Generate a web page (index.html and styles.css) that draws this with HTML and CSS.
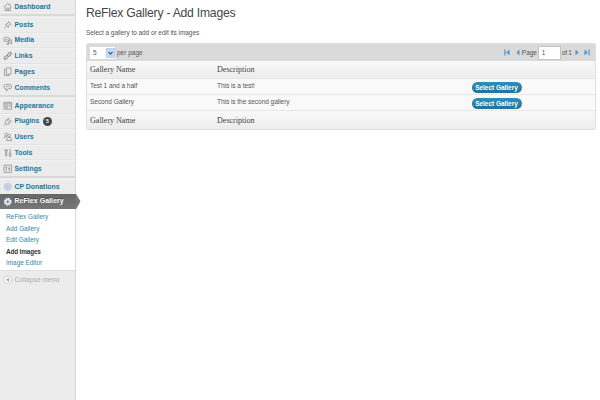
FILE: index.html
```html
<!DOCTYPE html>
<html lang="en">
<head>
<meta charset="utf-8">
<title>ReFlex Gallery</title>
<link rel="stylesheet" href="styles.css">
</head>
<body>
<div class="layout">
<nav class="sidebar">
  <ul class="group first">
    <li><svg class="icon" viewBox="0 0 10 10"><path d="M1 5.3 5 1.5l4 3.8M2.2 5v4h5.6V5M4.2 9V6.3h1.7V9M7.3 3V1.5"/></svg><a>Dashboard</a></li>
  </ul>
  <ul class="group">
    <li><svg class="icon" viewBox="0 0 10 10"><path d="M5.5 1.5 8.8 4.6M6 2 4.5 4.2 2.5 4.5l3.2 3.2.4-2L8.3 4.3M4 6.2 1 9"/></svg><a>Posts</a></li>
    <li><svg class="icon" viewBox="0 0 10 10"><path d="M1 2h1l.5-.8h1.7L4.800 2H6.500v3.500H1zM2.600 3.700h2M4.500 7v2h1.300V4.500l3.200-.5v4H7.500V6"/></svg><a>Media</a></li>
    <li><svg class="icon thick" viewBox="0 0 10 10"><path d="M4.500 4 6.500 1.800Q8 1 8.700 2.200 9 3.300 8 4L6.500 5.500Q5.500 6 4.800 5.500M5.500 5Q4.500 4 3.500 4.800L1.500 6.800Q.8 8 2 8.700 3 9 3.800 8L5 6.500"/></svg><a>Links</a></li>
    <li><svg class="icon" viewBox="0 0 10 10"><path d="M3.500 1h5v6.500h-5zM3.500 2.500H1.500v6.500h5V7.500"/></svg><a>Pages</a></li>
    <li><svg class="icon" viewBox="0 0 10 10"><path d="M2.500 1.500h5Q9 1.700 9 4 8.800 6 7 6H5.500L3.500 8.700V6Q1 6 1 4 1 1.700 2.500 1.500zM3 3.800h4"/></svg><a>Comments</a></li>
  </ul>
  <ul class="group">
    <li><svg class="icon" viewBox="0 0 10 10"><path d="M1 1.500h8v7.200H1zM1 3h8M2.500 4.500H5v2.700H2.500zM6.500 4.500H8M6.500 6H8"/></svg><a>Appearance</a></li>
    <li><svg class="icon" viewBox="0 0 10 10"><path d="M3 3.500 5.500 2l2.500 3-1.500 2.300Q4.500 8.500 3 7 1.500 5.500 3 3.500zM5.500 2 7 .9M8 5l1.200-1.500M3 7 1 9M4.500 3.500l2 2.500"/></svg><a>Plugins</a><span class="badge">5</span></li>
    <li><svg class="icon" viewBox="0 0 10 10"><circle cx="3.500" cy="2.700" r="1.500"/><circle cx="6.500" cy="3.800" r="1.500"/><path d="M1 7Q1 4.300 3.500 4.500L4.500 5.500M3.500 9Q3.800 5.500 6.500 5.500T9 9z"/></svg><a>Users</a></li>
    <li><svg class="icon" viewBox="0 0 10 10"><path d="M1 2.200h4.500M2.800 2v6.800M4 2v6.800M7.500 1v3.500M6.700 5h1.600v3.800H6.700z"/></svg><a>Tools</a></li>
    <li><svg class="icon" viewBox="0 0 10 10"><path d="M1 1.200h8v7.600H1zM3.500 2.500v5M6.500 2.500v5M2.500 3.500h2M5.500 5h2"/></svg><a>Settings</a></li>
  </ul>
  <ul class="group plugins">
    <li><svg class="icon donate" viewBox="0 0 10 10"><circle cx="5" cy="5" r="3.800"/><path d="M5 1v8M1 5h8M2.200 2.200l5.600 5.600M2.200 7.800l5.600-5.600"/></svg><a>CP Donations</a></li>
    <li class="current"><svg class="icon gear" viewBox="0 0 10 10"><circle class="cog" cx="5" cy="5" r="3.200"/><circle class="teeth" cx="5" cy="5" r="3.500"/><circle class="hub" cx="5" cy="5" r="1.200"/></svg><a>ReFlex Gallery</a><svg class="arrow" viewBox="0 0 5 16"><path d="M0 0 4.500 7.500 0 16z"/></svg></li>
  </ul>
  <ul class="submenu">
    <li><a>ReFlex Gallery</a></li>
    <li><a>Add Gallery</a></li>
    <li><a>Edit Gallery</a></li>
    <li><a class="active">Add Images</a></li>
    <li><a>Image Editor</a></li>
  </ul>
  <div class="collapse"><svg class="icon" viewBox="0 0 10 10"><circle cx="5" cy="5" r="4.200"/><path class="tip" d="M6.200 3v4L3.500 5z"/></svg><span>Collapse menu</span></div>
</nav>
<main class="content">
  <h1>ReFlex Gallery - Add Images</h1>
  <p class="intro">Select a gallery to add or edit its images</p>
  <section class="grid">
    <div class="pager">
      <span class="select"><span>5</span><svg viewBox="0 0 8 9"><rect x=".5" y=".5" width="7" height="8"/><path d="m2.200 3.500 1.800 2 1.800-2"/></svg></span>
      <span class="per">per page</span>
      <svg class="nav first-page" viewBox="0 0 6 7"><path d="M.3.500h1.200v6H.3zM5.500.500v6L2.200 3.500z"/></svg>
      <svg class="nav prev" viewBox="0 0 4 7"><path d="M3.500.500v6L.5 3.500z"/></svg>
      <span class="page">Page</span><span class="number">1</span><span class="of">of 1</span>
      <svg class="nav next" viewBox="0 0 4 7"><path d="M.5.500v6l3-3z"/></svg>
      <svg class="nav last-page" viewBox="0 0 6 7"><path d="M4.500.500h1.200v6H4.500zM.5.500v6l3.300-3z"/></svg>
    </div>
    <div class="row head"><span>Gallery Name</span><span>Description</span></div>
    <div class="row"><span>Test 1 and a half</span><span>This is a test!</span><a class="button">Select Gallery</a></div>
    <div class="row"><span>Second Gallery</span><span>This is the second gallery</span><a class="button">Select Gallery</a></div>
    <div class="row head foot"><span>Gallery Name</span><span>Description</span></div>
  </section>
</main>
</div>
</body>
</html>
```
FILE: styles.css
```css
* { box-sizing: border-box; }
body { margin: 0; background: #fff; color: #555; font: 6.5px/10px "Liberation Sans", Arial, sans-serif; overflow: hidden; }
ul { list-style: none; margin: 0; padding: 0; }
.layout { display: flex; height: 400px; }
.sidebar { width: 76px; flex: none; background: #ececec; border-right: 1px solid #d8d8d8; }
.group { border-top: 2px solid #d9d9d9; padding-top: 1px; height: 81px; }
.group.first { height: 14px; border: 0; padding: 0; }
.group li { display: flex; align-items: center; height: 15.6px; padding-left: 3px; border-bottom: 1px solid #e4e4e4; border-top: 1px solid #f2f2f2; font-weight: bold; font-size: 6.900px; color: #21759b; white-space: nowrap; }
.group li:last-child { border-bottom: 0; }
.group.first li { height: 14px; border: 0; }
.icon { width: 9.500px; height: 9.500px; margin-right: 2px; flex: none; fill: none; stroke: #929292; stroke-width: .85; }
.thick { stroke-width: 1.200; }
.donate { fill: #d5ddeb; stroke: #afbfd8; stroke-width: .6; }
.group.plugins { height: 33px; }
.group .current { position: relative; height: 15.500px; margin-top: -1px; margin-right: -1px; border: 0; background: linear-gradient(#666, #777); color: #fff; letter-spacing: .1px; text-shadow: 0 -1px #444; }
.arrow { position: absolute; left: 76px; top: 0; width: 5px; height: 15.500px; fill: #737373; }
.gear { stroke: none; }
.gear .cog { fill: #e4eaf8; }
.gear .teeth { fill: none; stroke: #e4eaf8; stroke-width: 1.400; stroke-dasharray: 1.700 1.050; }
.gear .hub { fill: #5d719b; }
.badge { width: 9px; height: 9px; margin-left: 3.500px; border-radius: 50%; background: #464646; color: #fff; font-size: 5px; line-height: 9px; text-align: center; }
.submenu { height: 62px; padding-top: 2px; background: #fff; border-bottom: 1px solid #dfdfdf; }
.submenu li { height: 11.500px; line-height: 11.500px; padding-left: 6px; font-size: 6.400px; color: #3486aa; white-space: nowrap; }
.submenu .active { color: #333; font-weight: bold; letter-spacing: -.15px; }
.collapse { display: flex; align-items: center; height: 17px; padding-left: 3px; color: #aaa; letter-spacing: .1px; }
.collapse .icon { fill: #f7f7f7; stroke: #c8c8c8; }
.collapse .tip { fill: #999; stroke: none; }
.content { flex: 1; padding: 5px 4px 0 10px; }
h1 { margin: 0; font-size: 12.200px; line-height: 16px; font-weight: normal; letter-spacing: -.24px; color: #464646; }
.intro { margin: 7px 0 5px; letter-spacing: -.05px; }
.grid { width: 510px; border: 1px solid #dfdfdf; border-radius: 2px; overflow: hidden; }
.pager { display: flex; align-items: center; height: 17px; padding: 0 5px 0 3px; background: #dadada; }
.select { display: flex; justify-content: space-between; align-items: center; width: 25px; height: 12px; padding-left: 3px; background: #fff; }
.select svg { width: 9px; height: 10px; fill: #c5daf6; stroke: #a8c3e9; stroke-width: .6; }
.select path { fill: none; stroke: #345f96; stroke-width: 1.200; }
.per { margin-left: 2px; }
.nav { flex: none; height: 7px; fill: #5294cb; }
.first-page, .last-page { width: 6px; }
.prev, .next { width: 4px; }
.first-page { margin-left: auto; }
.prev { margin: 0 2px 0 5.500px; }
.page { letter-spacing: -.05px; }
.number { width: 23px; height: 14px; margin: 0 1px; padding-left: 3px; border: 1px solid #c4c4c4; background: #fff; line-height: 12px; }
.of { letter-spacing: -.3px; }
.next { margin: 0 5.500px 0 3px; }
.row { display: grid; grid-template-columns: 127px 254.500px 1fr; align-items: start; height: 16px; padding: 2px 0 0 3px; background: #f9f9f9; border-bottom: 1px solid #e6e6e6; white-space: nowrap; letter-spacing: -.03px; }
.row.head { height: 18px; padding-top: 3px; background: linear-gradient(#f9f9f9, #ececec); color: #444; font: 8.100px/12px "Liberation Serif", "Times New Roman", serif; }
.row.foot { height: 18px; padding-top: 4px; border: 0; }
.button { width: 50px; height: 11px; margin-top: 1px; border-radius: 6px; background: linear-gradient(#2a91bc, #20739b); color: #fff; font-weight: bold; line-height: 11px; text-align: center; }
```
